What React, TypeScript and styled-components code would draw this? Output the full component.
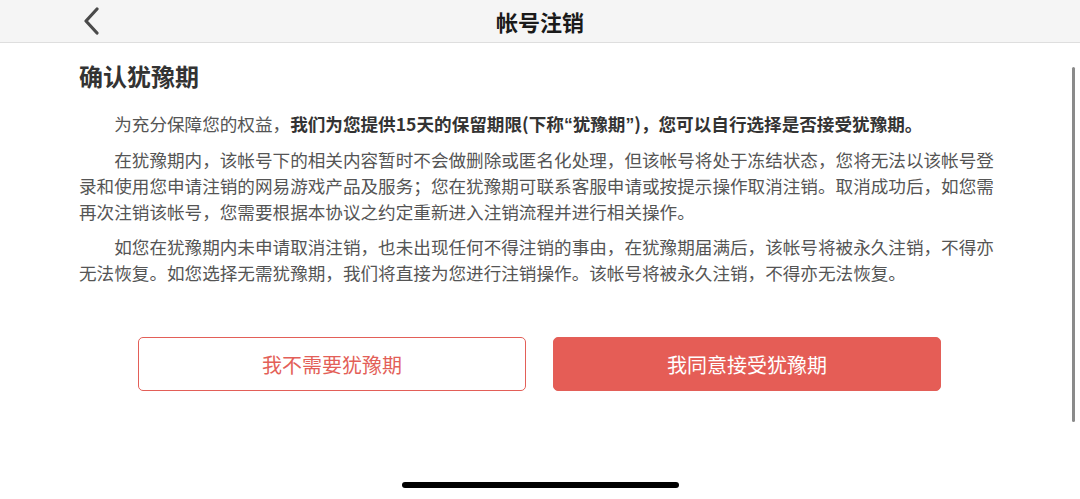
import React from "react";
import styled, { createGlobalStyle } from "styled-components";

const GlobalStyle = createGlobalStyle`
  html, body {
    margin: 0;
    padding: 0;
    background: #ffffff;
  }
  body {
    font-family: "Noto Sans CJK SC", "Noto Sans", sans-serif;
  }
  * { box-sizing: border-box; }
`;

const Page = styled.div`
  position: relative;
  width: 1080px;
  height: 499px;
  display: flex;
  flex-direction: column;
  overflow: hidden;
  background: #fff;
`;

const NavBar = styled.header`
  height: 43px;
  flex: none;
  background: #f5f5f5;
  border-bottom: 1px solid #dedede;
  display: grid;
  grid-template-columns: 120px 1fr 120px;
  align-items: center;
`;

const BackButton = styled.button`
  border: none;
  background: transparent;
  padding: 0 0 0 82px;
  height: 42px;
  display: flex;
  align-items: center;
  cursor: pointer;
`;

const NavTitle = styled.h1`
  margin: 0;
  text-align: center;
  font-size: 22px;
  font-weight: 700;
  color: #1a1a1a;
  line-height: 42px;
`;

const Content = styled.main`
  padding: 17px 0 0 79px;
  width: 1000px;
`;

const Heading = styled.h2`
  margin: 0 0 19px;
  font-size: 24px;
  line-height: 32px;
  font-weight: 700;
  color: #333;
`;

const Paragraph = styled.p`
  margin: 0 0 9px;
  width: 920px;
  font-size: 17.6px;
  line-height: 26px;
  color: #555;
  text-indent: 2em;
`;

const Strong = styled.strong`
  font-weight: 700;
  color: #333;
`;

const Quote = styled.span`
  font-family: "Liberation Sans", sans-serif;
`;

const Actions = styled.div`
  display: flex;
  justify-content: center;
  gap: 27px;
  margin-top: 42px;
  padding-right: 1px;
`;

const ActionButton = styled.button<{ $primary?: boolean }>`
  width: 388px;
  height: 54px;
  border-radius: 5px;
  font-family: "Noto Sans CJK SC", "Noto Sans", sans-serif;
  font-size: 20px;
  font-weight: 400;
  cursor: pointer;
  border: 1.5px solid #e35f58;
  background: ${(p) => (p.$primary ? "#e55d56" : "#ffffff")};
  color: ${(p) => (p.$primary ? "#ffffff" : "#e35f58")};
`;

const HomeIndicator = styled.div`
  margin: auto auto 11px;
  width: 277px;
  height: 6px;
  border-radius: 3px;
  background: #000;
`;

const ScrollThumb = styled.div`
  position: absolute;
  left: 1072px;
  top: 67px;
  width: 3px;
  height: 355px;
  border-radius: 1.5px;
  background: #8a8a8a;
`;

const BackIcon = () => (
  <svg width="18" height="28" viewBox="0 0 18 28" fill="none">
    <path
      d="M15 2 L4 14 L15 26"
      stroke="#4a4a4a"
      strokeWidth="3.2"
      strokeLinecap="round"
      strokeLinejoin="round"
    />
  </svg>
);

export default function App() {
  return (
    <>
      <GlobalStyle />
      <Page>
        <NavBar>
          <BackButton aria-label="返回">
            <BackIcon />
          </BackButton>
          <NavTitle>帐号注销</NavTitle>
          <span />
        </NavBar>
        <Content>
          <Heading>确认犹豫期</Heading>
          <Paragraph>
            为充分保障您的权益，
            <Strong>
              我们为您提供15天的保留期限(下称<Quote>“</Quote>犹豫期<Quote>”</Quote>)，您可以自行选择是否接受犹豫期。
            </Strong>
          </Paragraph>
          <Paragraph>
            在犹豫期内，该帐号下的相关内容暂时不会做删除或匿名化处理，但该帐号将处于冻结状态，您将无法以该帐号登录和使用您申请注销的网易游戏产品及服务；您在犹豫期可联系客服申请或按提示操作取消注销。取消成功后，如您需再次注销该帐号，您需要根据本协议之约定重新进入注销流程并进行相关操作。
          </Paragraph>
          <Paragraph>
            如您在犹豫期内未申请取消注销，也未出现任何不得注销的事由，在犹豫期届满后，该帐号将被永久注销，不得亦无法恢复。如您选择无需犹豫期，我们将直接为您进行注销操作。该帐号将被永久注销，不得亦无法恢复。
          </Paragraph>
        </Content>
        <Actions>
          <ActionButton>我不需要犹豫期</ActionButton>
          <ActionButton $primary>我同意接受犹豫期</ActionButton>
        </Actions>
        <HomeIndicator />
        <ScrollThumb />
      </Page>
    </>
  );
}
